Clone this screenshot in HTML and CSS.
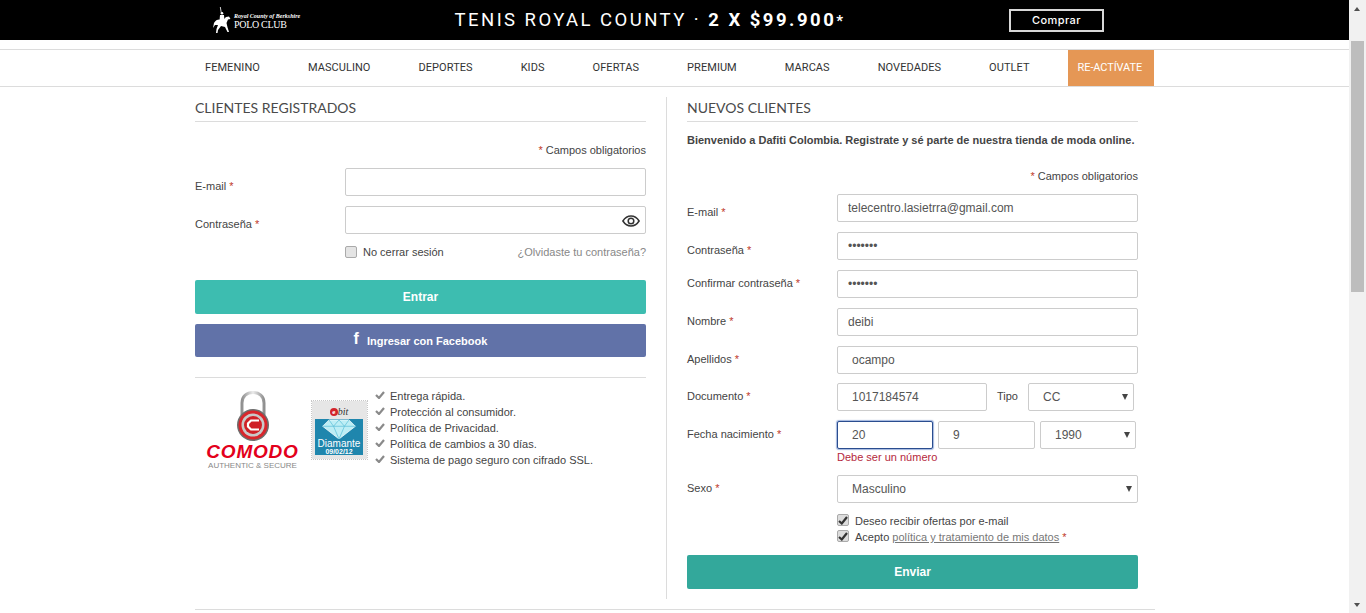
FILE: index.html
```html
<!DOCTYPE html>
<html lang="es">
<head>
<meta charset="utf-8">
<title>Dafiti Colombia</title>
<link rel="stylesheet" href="styles.css">
</head>
<body>
<div class="viewport">
  <div class="page">
    <header class="promo">
      <div class="promo-inner">
        <div class="polo">
          <svg class="polo-horse" width="18" height="26" viewBox="0 0 18 26"><path fill="none" stroke="#fff" stroke-width=".8" d="M7.300 0L8.300 6"/><circle cx="9" cy="6.300" r="1.300" fill="#fff"/><path fill="#fff" d="M7 8h4l.5 6H6.500z"/><path fill="#fff" d="M1 16C3 12 6 12 10 13l3-3 3-.5 1.500 2.500-2.500.5-1.500 3.500c.5 3 1.500 6 2.500 9h-1.500L12 20l-4-1-3 4-.5 3H3l.5-4L5 18H2L0 21z"/></svg>
          <div class="polo-text">
            <span class="polo-script">Royal County of Berkshire</span>
            <span class="polo-name">POLO CLUB</span>
          </div>
        </div>
        <div class="promo-title">TENIS ROYAL COUNTY <span class="promo-dot">·</span> <strong>2 X $99.900<small>*</small></strong></div>
        <a class="promo-btn">Comprar</a>
      </div>
    </header>

    <nav class="nav">
      <div class="nav-inner">
        <a class="nav-item">FEMENINO</a>
        <a class="nav-item">MASCULINO</a>
        <a class="nav-item">DEPORTES</a>
        <a class="nav-item">KIDS</a>
        <a class="nav-item">OFERTAS</a>
        <a class="nav-item">PREMIUM</a>
        <a class="nav-item">MARCAS</a>
        <a class="nav-item">NOVEDADES</a>
        <a class="nav-item">OUTLET</a>
        <a class="nav-item nav-accent">RE-ACTÍVATE</a>
      </div>
    </nav>

    <main class="content">
      <section class="col col-left">
        <h2 class="col-title">CLIENTES REGISTRADOS</h2>
        <p class="required required-left"><span class="star">*</span> Campos obligatorios</p>
        <div class="row row-first">
          <label class="label label-low">E-mail <span class="star">*</span></label>
          <div class="control"><input class="field" type="text"></div>
        </div>
        <div class="row">
          <label class="label label-low">Contraseña <span class="star">*</span></label>
          <div class="control eye-wrap">
            <input class="field" type="password">
            <svg class="eye" width="18" height="12" viewBox="0 0 18 12"><path fill="none" stroke="#333" stroke-width="1.500" d="M.9 6C3 2.700 5.800 1 9 1s6 1.700 8.100 5C15 9.300 12.200 11 9 11S3 9.300.9 6z"/><circle cx="9" cy="6" r="2.800" fill="none" stroke="#333" stroke-width="1.500"/></svg>
          </div>
        </div>
        <div class="keep">
          <span class="keep-box"><span class="check"></span>No cerrar sesión</span>
          <a class="forgot">¿Olvidaste tu contraseña?</a>
        </div>
        <button class="btn btn-enter">Entrar</button>
        <button class="btn btn-fb"><span class="fb-f">f</span>Ingresar con Facebook</button>
        <hr class="rule">
        <div class="trust">
          <div class="comodo">
            <svg class="comodo-lock" width="38" height="51" viewBox="0 0 38 51">
              <defs>
                <linearGradient id="shackle" x1="0" x2="1" y1="0" y2="0"><stop offset="0" stop-color="#8f8f8f"/><stop offset=".5" stop-color="#ececec"/><stop offset="1" stop-color="#8f8f8f"/></linearGradient>
              </defs>
              <path d="M8 24V12C8 5 13 1.500 19 1.500S30 5 30 12v12" fill="none" stroke="url(#shackle)" stroke-width="3"/>
              <circle cx="19" cy="34" r="16" fill="#6d6d6d"/>
              <circle cx="19" cy="34" r="14.500" fill="#d8262c"/>
              <circle cx="19" cy="34" r="11.500" fill="#c9c9c9"/>
              <circle cx="19" cy="34" r="9" fill="#cf2027"/>
              <path d="M25 29.500h-8l-3 3v3l3 3h8" fill="none" stroke="#fff" stroke-width="2.200"/>
            </svg>
            <span class="comodo-name">COMODO</span>
            <span class="comodo-sub">AUTHENTIC &amp; SECURE</span>
          </div>
          <div class="ebit">
            <div class="ebit-logo"><span class="ebit-e">e</span><em>bit</em></div>
            <div class="ebit-panel">
              <svg class="ebit-gem" width="36" height="20" viewBox="0 0 38 22"><path fill="#bdeef5" stroke="#fff" stroke-width=".8" d="M8 1h22l7 7-18 14L1 8z"/><path fill="none" stroke="#5cc0d8" stroke-width=".8" d="M1 8h36M8 1l5 7 6-7 6 7 5-7M13 8l6 14 6-14"/></svg>
              <span class="ebit-word">Diamante</span>
              <span class="ebit-date">09/02/12</span>
            </div>
          </div>
          <ul class="perks">
            <li class="perk"><svg class="tick" width="10" height="8" viewBox="0 0 10 8"><path fill="none" stroke="#8a8a8a" stroke-width="2.200" d="M1 4l3 3 5-6"/></svg>Entrega rápida.</li>
            <li class="perk"><svg class="tick" width="10" height="8" viewBox="0 0 10 8"><path fill="none" stroke="#8a8a8a" stroke-width="2.200" d="M1 4l3 3 5-6"/></svg>Protección al consumidor.</li>
            <li class="perk"><svg class="tick" width="10" height="8" viewBox="0 0 10 8"><path fill="none" stroke="#8a8a8a" stroke-width="2.200" d="M1 4l3 3 5-6"/></svg>Política de Privacidad.</li>
            <li class="perk"><svg class="tick" width="10" height="8" viewBox="0 0 10 8"><path fill="none" stroke="#8a8a8a" stroke-width="2.200" d="M1 4l3 3 5-6"/></svg>Política de cambios a 30 días.</li>
            <li class="perk"><svg class="tick" width="10" height="8" viewBox="0 0 10 8"><path fill="none" stroke="#8a8a8a" stroke-width="2.200" d="M1 4l3 3 5-6"/></svg>Sistema de pago seguro con cifrado SSL.</li>
          </ul>
        </div>
      </section>

      <section class="col col-right">
        <h2 class="col-title">NUEVOS CLIENTES</h2>
        <p class="welcome">Bienvenido a Dafiti Colombia. Registrate y sé parte de nuestra tienda de moda online.</p>
        <p class="required required-right"><span class="star">*</span> Campos obligatorios</p>
        <div class="row row-first">
          <label class="label label-low">E-mail <span class="star">*</span></label>
          <div class="control"><input class="field" type="text" value="telecentro.lasietrra@gmail.com"></div>
        </div>
        <div class="row">
          <label class="label label-low">Contraseña <span class="star">*</span></label>
          <div class="control"><input class="field" type="password" value="1234567"></div>
        </div>
        <div class="row">
          <label class="label">Confirmar contraseña <span class="star">*</span></label>
          <div class="control"><input class="field" type="password" value="1234567"></div>
        </div>
        <div class="row">
          <label class="label">Nombre <span class="star">*</span></label>
          <div class="control"><input class="field" type="text" value="deibi"></div>
        </div>
        <div class="row">
          <label class="label">Apellidos <span class="star">*</span></label>
          <div class="control"><input class="field field-wide" type="text" value="ocampo"></div>
        </div>
        <div class="row row-doc">
          <label class="label">Documento <span class="star">*</span></label>
          <div class="control control-split">
            <input class="field field-wide doc" type="text" value="1017184574">
            <span class="tipo">Tipo</span>
            <div class="pick pick-tipo"><select class="field field-wide"><option>CC</option></select></div>
          </div>
        </div>
        <div class="row">
          <label class="label">Fecha nacimiento <span class="star">*</span></label>
          <div class="control control-date">
            <input class="field field-wide field-focus day" type="text" value="20">
            <input class="field field-wide month" type="text" value="9">
            <div class="pick pick-year"><select class="field field-wide"><option>1990</option></select></div>
          </div>
        </div>
        <p class="error">Debe ser un número</p>
        <div class="row">
          <label class="label">Sexo <span class="star">*</span></label>
          <div class="control"><div class="pick"><select class="field field-wide"><option>Masculino</option></select></div></div>
        </div>
        <div class="opts">
          <div class="opt"><span class="check check-on"><svg width="10" height="9" viewBox="0 0 10 9"><path fill="none" stroke="#333" stroke-width="2.200" d="M1 5l2.800 2.500L9 1"/></svg></span>Deseo recibir ofertas por e-mail</div>
          <div class="opt"><span class="check check-on"><svg width="10" height="9" viewBox="0 0 10 9"><path fill="none" stroke="#333" stroke-width="2.200" d="M1 5l2.800 2.500L9 1"/></svg></span>Acepto&nbsp;<a class="policy">política y tratamiento de mis datos</a>&nbsp;<span class="star">*</span></div>
        </div>
        <button class="btn btn-send">Enviar</button>
      </section>
    </main>
    <hr class="rule page-rule">
  </div>
  <div class="scrollbar">
    <span class="arrow-up"></span>
    <span class="thumb"></span>
    <span class="arrow-down"></span>
  </div>
</div>
</body>
</html>
```
FILE: styles.css
```css
* { box-sizing: border-box; }
html, body { margin: 0; padding: 0; height: 613px; overflow: hidden; background: #fff; }
body { font-family: "Liberation Sans", Arial, sans-serif; font-size: 11px; line-height: 16px; color: #444; }
p, h2, ul { margin: 0; padding: 0; }

.viewport { display: flex; height: 613px; }
.page { width: 1349px; flex: none; }

/* promo bar */
.promo { background: #000; height: 40px; color: #fff; }
.promo-inner { display: flex; align-items: center; height: 40px; padding-left: 213px; }
.polo { display: flex; width: 241.500px; flex: none; align-items: center; height: 40px; }
.polo-horse { flex: none; }
.polo-text { display: flex; flex-direction: column; margin-left: 3px; font-family: "Liberation Serif", serif; margin-top: 1px; }
.polo-script { font-size: 6px; line-height: 8px; font-style: italic; font-weight: 700; white-space: nowrap; }
.polo-name { font-size: 10px; line-height: 9px; letter-spacing: -.3px; white-space: nowrap; }
.promo-title { width: 554.500px; flex: none; font-family: Roboto, sans-serif; font-size: 18.500px; letter-spacing: 2.460px; white-space: nowrap; line-height: 40px; font-weight: 400; padding-top: 1px; }
.promo-title strong { font-weight: 700; letter-spacing: 2.500px; font-size: 18.500px; }
.promo-title small { font-size: 15px; letter-spacing: 0; }
.promo-btn { display: flex; align-items: center; justify-content: center; width: 95px; height: 23px; border: 2px solid #d8d8d8; font-family: Inter, sans-serif; font-size: 11px; font-weight: 500; letter-spacing: .4px; color: #fff; background: #000; }

/* nav */
.nav { margin-top: 9px; height: 38px; border-top: 1px solid #dcdcdc; border-bottom: 1px solid #dcdcdc; }
.nav-inner { display: flex; gap: 28px; margin-left: 195px; height: 36px; }
.nav-item { display: flex; align-items: center; padding: 0 10px; font-family: Roboto, sans-serif; font-size: 11px; letter-spacing: .06px; color: #333; white-space: nowrap; }
.nav-accent { background: #e59755; color: #fff; width: 86px; padding: 0 0 0 10px; letter-spacing: -.1px; }

/* content */
.content { display: flex; width: 960px; margin-left: 195px; padding-top: 10px; }
.col { width: 451px; flex: none; }
.col-left { margin-right: 20px; }
.col-right { border-left: 1px solid #dcdcdc; padding: 0 0 10px 20px; width: 472px; }
.col-title { height: 25px; border-bottom: 1px solid #dcdcdc; font-family: Lato, sans-serif; font-weight: 400; font-size: 14px; line-height: 21px; color: #4a4a4a; }

.star { color: #c0392b; }
.required { text-align: right; }
.required-left { margin-top: 20px; }
.required-right { margin-top: 20px; }
.welcome { margin-top: 10px; font-weight: 700; color: #444; white-space: nowrap; }

.row { display: flex; margin-top: 10px; height: 28px; }
.row-doc { margin-top: 9px; }
.label { flex: 0 0 150px; display: block; line-height: 26px; white-space: nowrap; color: #444; }
.label-low { line-height: 16px; padding-top: 10px; }
.control { width: 301px; flex: none; }
.control-split { display: flex; }
.control-date { display: flex; gap: 5px; }

.field { display: block; width: 100%; height: 28px; margin: 0; padding: 0 10px; border: 1px solid #ccc; border-radius: 2px; background: #fff; font-family: "Liberation Sans", Arial, sans-serif; font-size: 12px; color: #555; outline: none; appearance: none; -webkit-appearance: none; }
.field-wide { padding-left: 14px; }
.field-focus { border-color: #2a4d8f; box-shadow: 0 0 1px 1px rgba(70,110,190,.5); }
.doc { width: 150px; flex: none; }
.tipo { width: 41px; flex: none; padding-left: 10px; line-height: 26px; }
.pick { position: relative; }
.pick::after { content: ""; position: absolute; right: 6px; top: 11px; border-left: 3.500px solid transparent; border-right: 3.500px solid transparent; border-top: 6px solid #444; }
.pick-tipo { width: 106px; flex: none; }
.pick-year { width: 96px; flex: none; }
.day { width: 96px; flex: none; }
.month { width: 97px; flex: none; }

.eye-wrap { position: relative; }
.eye { position: absolute; right: 6px; top: 9px; }

.keep { display: flex; justify-content: space-between; align-items: center; margin-top: 10px; margin-left: 150px; height: 16px; }
.keep-box { display: flex; align-items: center; }
.check { display: inline-flex; align-items: center; justify-content: center; width: 12px; height: 12px; margin-right: 6px; border: 1px solid #aaa; border-radius: 2px; background: #e4e4e4; flex: none; }
.check-on { background: #ddd; margin-right: 6px; margin-top: -2px; }
.forgot { color: #888; }

.btn { display: flex; align-items: center; justify-content: center; width: 100%; border: 0; border-radius: 2px; font-family: "Liberation Sans", Arial, sans-serif; font-size: 12px; font-weight: 700; color: #fff; padding: 0; }
.btn-enter { height: 34px; margin-top: 20px; background: #3dbdb0; }
.btn-fb { height: 33px; margin-top: 10px; background: #6172a8; font-size: 11px; }
.fb-f { font-size: 16px; margin-right: 8px; margin-top: -4px; }
.btn-send { height: 34px; margin-top: 10px; background: #33a89b; }

.rule { border: 0; border-top: 1px solid #dcdcdc; margin: 20px 0 0; height: 0; }
.page-rule { width: 960px; margin: 10px 0 0 195px; }

/* trust */
.trust { display: flex; padding-top: 13px; }
.comodo { display: flex; flex-direction: column; align-items: center; width: 103px; margin-left: 6px; flex: none; }
.comodo-lock { flex: none; }
.comodo-name { margin-top: 2px; font-size: 19px; line-height: 16px; font-weight: 700; font-style: italic; letter-spacing: .8px; color: #e3001b; white-space: nowrap; }
.comodo-sub { font-size: 8px; line-height: 11px; color: #888; white-space: nowrap; }
.ebit { width: 55px; height: 58px; flex: none; margin: 10px 0 0 8px; padding: 3px 4px 3px 3px; background: #e6e6e6; outline: 1px dotted #c8c8c8; display: flex; flex-direction: column; align-items: center; }
.ebit-logo { display: flex; align-items: center; height: 15px; font-family: "Liberation Serif", serif; font-size: 10px; color: #333; }
.ebit-e { display: inline-flex; align-items: center; justify-content: center; width: 8px; height: 8px; border-radius: 50%; background: #d3232a; color: #fff; font-size: 7px; line-height: 8px; font-weight: 700; }
.ebit-panel { width: 48px; height: 36px; background: #1f86ad; display: flex; flex-direction: column; align-items: center; color: #fff; }
.ebit-gem { flex: none; margin-top: 0; }
.ebit-word { font-size: 10px; line-height: 9px; white-space: nowrap; }
.ebit-date { font-size: 7px; line-height: 7px; font-weight: 700; white-space: nowrap; }
.perks { list-style: none; margin: -3px 0 0 8px; }
.perk { display: flex; align-items: center; height: 16px; white-space: nowrap; }
.tick { margin-right: 5px; flex: none; margin-top: -2px; }

/* right options */
.opts { margin-top: 10px; margin-left: 150px; }
.opt { display: flex; align-items: center; height: 16px; white-space: nowrap; }
.policy { color: #777; text-decoration: underline; }

.error { margin-left: 150px; color: #b5283c; height: 16px; }

/* fake scrollbar */
.scrollbar { position: relative; width: 17px; flex: none; background: #f1f1f1; }
.thumb { position: absolute; left: 2px; top: 41px; width: 13px; height: 251px; background: #bdbdbd; }
.arrow-up { position: absolute; left: 5px; top: 7px; border-left: 3.500px solid transparent; border-right: 3.500px solid transparent; border-bottom: 4px solid #505050; }
.arrow-down { position: absolute; left: 5px; bottom: 6px; border-left: 3.500px solid transparent; border-right: 3.500px solid transparent; border-top: 4px solid #505050; }
```
